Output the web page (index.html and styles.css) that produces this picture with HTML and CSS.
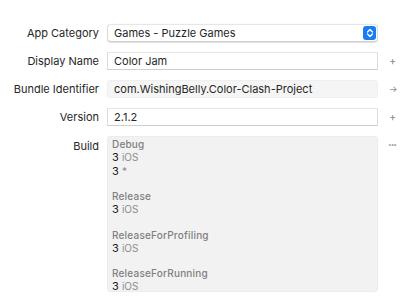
FILE: index.html
```html
<!DOCTYPE html>
<html lang="en">
<head>
    <meta charset="UTF-8">
    <title>Identity</title>
    <link rel="stylesheet" href="styles.css">
</head>
<body>
<div class="form">
    <div class="label">App Category</div>
    <div class="select">
        <span>Games - Puzzle Games</span>
        <span class="stepper">
            <svg width="8" height="10" viewBox="0 0 8 10"><path d="M1.5 4 L4 1.5 L6.5 4 M1.5 6 L4 8.5 L6.5 6" fill="none" stroke="#fff" stroke-width="1.3" stroke-linecap="round" stroke-linejoin="round"/></svg>
        </span>
    </div>
    <div class="action"></div>

    <div class="label">Display Name</div>
    <div class="field">Color Jam</div>
    <div class="action">+</div>

    <div class="label">Bundle Identifier</div>
    <div class="field readonly">com.WishingBelly.Color-Clash-Project</div>
    <div class="action arrow">→</div>

    <div class="label">Version</div>
    <div class="field">2.1.2</div>
    <div class="action">+</div>

    <div class="label top">Build</div>
    <div class="build">
        <div class="group">
            <div class="config">Debug</div>
            <div class="line">3 <span class="dim">iOS</span></div>
            <div class="line">3 <span class="dim">*</span></div>
        </div>
        <div class="group">
            <div class="config">Release</div>
            <div class="line">3 <span class="dim">iOS</span></div>
        </div>
        <div class="group">
            <div class="config">ReleaseForProfiling</div>
            <div class="line">3 <span class="dim">iOS</span></div>
        </div>
        <div class="group">
            <div class="config">ReleaseForRunning</div>
            <div class="line">3 <span class="dim">iOS</span></div>
        </div>
    </div>
    <div class="action more">···</div>
</div>
</body>
</html>
```

FILE: styles.css
```css
* {
    margin: 0;
    padding: 0;
    box-sizing: border-box;
}
body {
    background: #ffffff;
    color: #262626;
    font-family: 'Inter', 'Liberation Sans', sans-serif;
    font-size: 11px;
}
.form {
    display: grid;
    grid-template-columns: 99px 271px 30px;
    grid-template-rows: 18px 18px 18px 18px auto;
    column-gap: 8px;
    row-gap: 10px;
    padding-top: 24px;
    align-items: center;
}
.label {
    text-align: right;
    color: #262626;
    line-height: 18px;
}
.label.top {
    align-self: start;
    padding-top: 1px;
}
.select, .field {
    height: 18px;
    line-height: 16px;
    padding: 0 6px;
    border: 1px solid #dcdcdc;
    border-top-color: #e6e6e6;
    border-bottom-color: #cfcfcf;
    background: #ffffff;
}
.select {
    display: flex;
    justify-content: space-between;
    align-items: center;
    border-radius: 4px;
    padding-right: 1px;
    box-shadow: 0 0.5px 1px rgba(0,0,0,0.12);
}
.stepper {
    width: 13px;
    height: 14px;
    background: #1a7cf5;
    border-radius: 3px;
    display: flex;
    align-items: center;
    justify-content: center;
}
.field.readonly {
    background: #f5f5f5;
    border-color: #efefef;
    border-radius: 3px;
}
.action {
    color: #8a8a8a;
    font-size: 11px;
    padding-left: 3px;
    line-height: 18px;
}
.action.arrow {
    font-size: 9px;
}
.action.more {
    align-self: start;
    font-weight: bold;
    letter-spacing: -1px;
    padding-left: 2px;
}
.build {
    background: #f2f2f2;
    border: 1px solid #ececec;
    border-radius: 3px;
    padding: 1px 4px 5px;
    height: 156px;
}
.group {
    margin-bottom: 12px;
}
.config {
    color: #808080;
    font-weight: 500;
    font-size: 10px;
    line-height: 13px;
    letter-spacing: 0.2px;
}
.line {
    line-height: 13.5px;
    color: #1a1a1a;
}
.dim {
    color: #8c8c8c;
    font-size: 10px;
}
```
